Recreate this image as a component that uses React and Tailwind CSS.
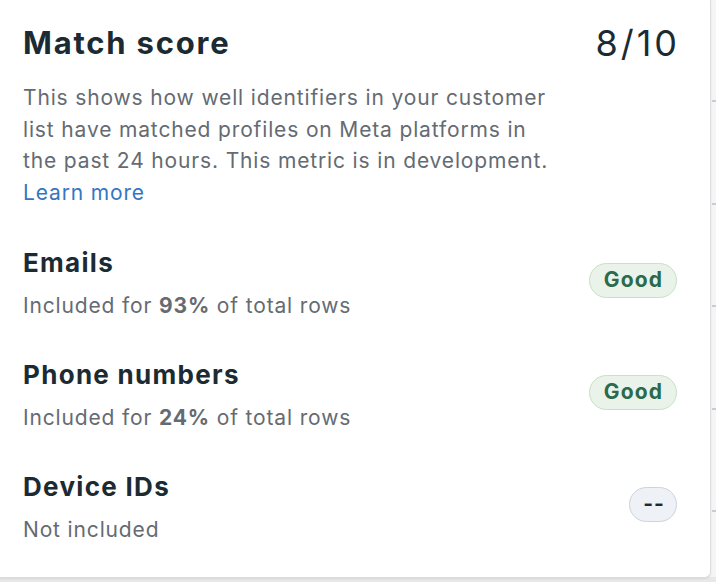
import React from "react";

const rows = [
  { title: "Emails", pct: "93%", status: "good" },
  { title: "Phone numbers", pct: "24%", status: "good" },
  { title: "Device IDs", pct: null, status: "none" },
];

function Badge({ status }) {
  if (status === "good") {
    return (
      <span className="inline-flex h-[35px] w-[88px] items-center justify-center rounded-full border-[1.5px] border-[#c6e1c4] bg-[#eaf3e9] pl-[1px] text-[21px] font-bold tracking-[1.2px] text-[#2b6a4b]">
        Good
      </span>
    );
  }
  return (
    <span className="inline-flex h-[35px] w-[48px] items-center justify-center rounded-full border-[1.5px] border-[#cdd3d9] bg-[#eef1f5] pl-[2px] text-[21px] font-bold tracking-[1px] text-[#1c2b33]">
      --
    </span>
  );
}

export default function App() {
  return (
    <div
      className="relative h-[582px] w-[716px] overflow-hidden bg-[#f5f5f6]"
      style={{ fontFamily: "Inter, 'Noto Sans', sans-serif" }}
    >
      {/* axis ticks peeking out behind the card */}
      {[100, 203, 305, 408, 510].map((y) => (
        <div key={y} className="absolute left-[712px] h-[2px] w-[4px] bg-[#c9ccd1]" style={{ top: y }} />
      ))}
      <div className="absolute bottom-0 left-0 h-[5px] w-[716px] bg-[#e8e8e9]" />

      <div className="relative h-[578px] w-[711px] rounded-br-[6px] border-r border-b border-[#dcdde0] bg-white pl-[23px] pr-[33px] pt-[23px] shadow-[0_1px_2px_rgba(0,0,0,0.08)]">
        <div className="flex items-start justify-between">
          <h2 className="text-[31px] font-bold leading-[40px] tracking-[1.8px] text-[#1c2b33]">Match score</h2>
          <div className="-mr-[3px] text-[36px] leading-[40px] tracking-[3px] text-[#1c2b33]">8/10</div>
        </div>
        <p className="mt-[19px] text-[21px] leading-[31.5px] tracking-[0.85px] text-[#646b72]">
          This shows how well identifiers in your customer
          <br />
          list have matched profiles on Meta platforms in
          <br />
          the past 24 hours. This metric is in development.
          <br />
          <a className="text-[#3576c2]" href="#">Learn more</a>
        </p>

        <div className="mt-[39px] flex flex-col gap-[39px]">
          {rows.map((r) => (
            <div key={r.title} className="flex items-center justify-between">
              <div>
                <div className="text-[26px] font-bold leading-[32px] tracking-[1.3px] text-[#1c2b33]">{r.title}</div>
                <div className="mt-[13px] text-[21px] leading-[28px] tracking-[0.85px] text-[#646b72]">
                  {r.pct ? (
                    <>
                      Included for <span className="font-bold">{r.pct}</span> of total rows
                    </>
                  ) : (
                    "Not included"
                  )}
                </div>
              </div>
              <div className="-mt-[7px]">
                <Badge status={r.status} />
              </div>
            </div>
          ))}
        </div>
      </div>
    </div>
  );
}
